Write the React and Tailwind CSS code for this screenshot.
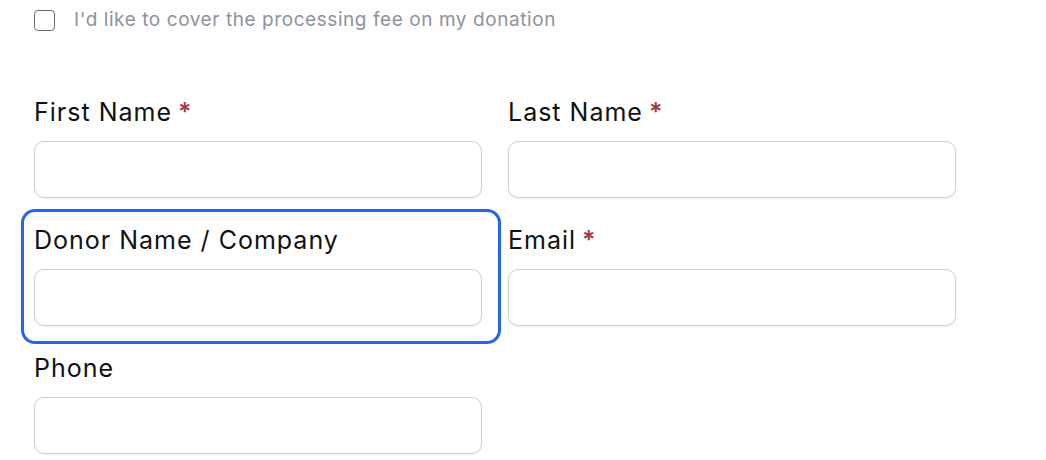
import { useState } from "react";

function Field({ label, required, focused }) {
  return (
    <div className="relative">
      {focused && (
        <div className="pointer-events-none absolute -left-[13px] -right-[19px] -top-[16px] -bottom-[18px] rounded-[14px] border-[3px] border-[#2366e8]" />
      )}
      <label className="mb-[12px] flex h-8 items-center text-[25px] tracking-[0.04em] text-[#111]">
        {label}
        {required && <span className="ml-1.5 font-semibold text-[#a33b48]">*</span>}
      </label>
      <input
        type="text"
        className="block h-[57px] w-full rounded-[10px] border border-[#cfcfcf] bg-white px-4 text-[18px] shadow-[0_1px_2px_rgba(0,0,0,0.06)] outline-none"
      />
    </div>
  );
}

export default function App() {
  const [coverFee, setCoverFee] = useState(false);

  return (
    <div className="min-h-[460px] bg-white pl-[34px] pt-[6px] font-['Inter','Liberation_Sans',sans-serif]">
      {/* processing fee checkbox */}
      <label className="flex items-center gap-[19px]">
        <input
          type="checkbox"
          checked={coverFee}
          onChange={(e) => setCoverFee(e.target.checked)}
          className="h-[21px] w-[21px] appearance-none rounded-[4px] border-[1.5px] border-[#6b6b6b] bg-white"
        />
        <span className="text-[19px] tracking-[0.03em] text-[#8e939b]">I'd like to cover the processing fee on my donation</span>
      </label>

      {/* donor fields */}
      <div className="mt-[62px] grid w-[922px] grid-cols-2 gap-x-[26px] gap-y-[27px]">
        <Field label="First Name" required />
        <Field label="Last Name" required />
        <Field label="Donor Name / Company" focused />
        <Field label="Email" required />
        <Field label="Phone" />
      </div>
    </div>
  );
}
